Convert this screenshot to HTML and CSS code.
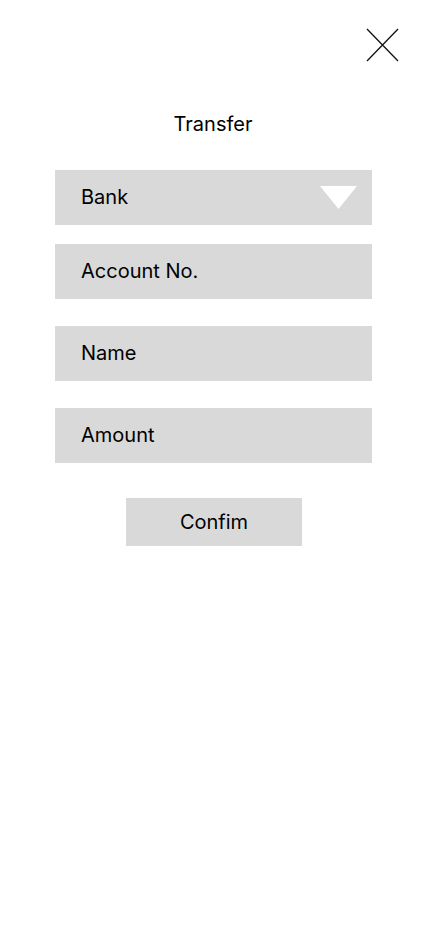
FILE: index.html
```html
<!DOCTYPE html>
<html lang="en">
<head>
<meta charset="utf-8">
<title>Transfer</title>
<link rel="stylesheet" href="styles.css">
</head>
<body>
<div class="page">
  <div class="topbar">
    <button class="close" aria-label="Close">
      <svg width="33" height="34" viewBox="0 0 33 34"><path d="M1 1 L32 33 M32 1 L1 33" stroke="#111" stroke-width="1.3" fill="none"/></svg>
    </button>
  </div>
  <h1 class="title">Transfer</h1>
  <form class="form">
    <div class="field field-select">
      <span>Bank</span>
      <svg class="caret" width="37" height="23" viewBox="0 0 37 23"><polygon points="0,0 37,0 18.5,23" fill="#fff"/></svg>
    </div>
    <div class="fields">
      <div class="field"><span>Account No.</span></div>
      <div class="field"><span>Name</span></div>
      <div class="field"><span>Amount</span></div>
    </div>
    <div class="actions">
      <button type="button" class="confirm">Confim</button>
    </div>
  </form>
</div>
</body>
</html>
```

FILE: styles.css
```css
* { box-sizing: border-box; }
html, body { margin: 0; padding: 0; background: #fff; }
body { font-family: Inter, "Noto Sans", sans-serif; color: #000; }
.page { width: 428px; min-height: 926px; }
.topbar { display: flex; justify-content: flex-end; padding: 28px 29px 0 0; }
.close { border: 0; background: none; padding: 0; width: 33px; height: 34px; display: block; }
.close svg { display: block; }
.title { margin: 50px 0 0; font-size: 20px; font-weight: 400; line-height: 24px; text-align: center; padding-right: 2px; }
.form { margin: 34px 0 0 55px; width: 317px; display: flex; flex-direction: column; }
.field { height: 55px; background: #d9d9d9; display: flex; align-items: center; justify-content: space-between; padding: 0 15px 2px 26px; font-size: 20px; line-height: 24px; }
.caret { display: block; margin-top: 1px; }
.fields { display: flex; flex-direction: column; gap: 27px; margin-top: 19px; }
.actions { display: flex; justify-content: center; margin-top: 35px; padding-left: 1px; }
.confirm { width: 176px; height: 48px; border: 0; background: #d9d9d9; font-family: Inter, "Noto Sans", sans-serif; font-size: 20px; color: #000; padding: 0; }
```
